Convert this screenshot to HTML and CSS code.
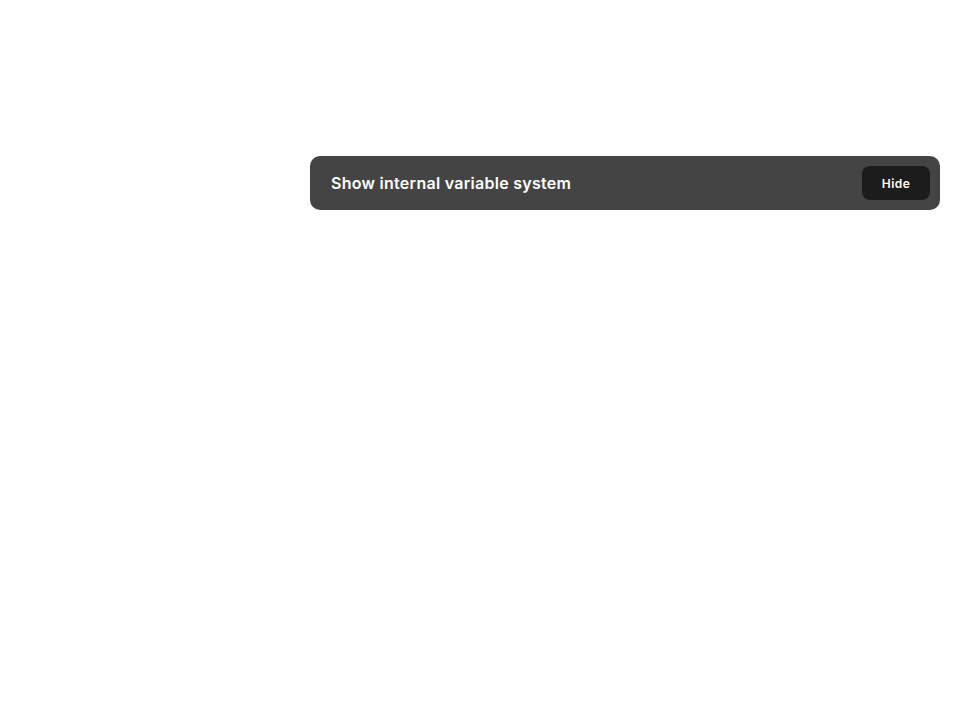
FILE: index.html
```html
<!DOCTYPE html>
<html>
<head>
<meta charset="utf-8">
<link rel="stylesheet" href="styles.css">
</head>
<body>
<div class="page">
  <div class="banner">
    <span class="banner-text">Show internal variable system</span>
    <button class="hide-btn">Hide</button>
  </div>
</div>
</body>
</html>
```
FILE: styles.css
```css
html, body {
  margin: 0;
  padding: 0;
  background: #ffffff;
  font-family: Inter, "Noto Sans", sans-serif;
}
.page {
  display: flex;
  justify-content: flex-end;
  padding: 156px 20px 0 0;
}
.banner {
  width: 630px;
  height: 54px;
  box-sizing: border-box;
  background: #444444;
  border-radius: 10px;
  display: flex;
  align-items: center;
  justify-content: space-between;
  padding: 0 10px 0 21px;
}
.banner-text {
  color: #ffffff;
  font-size: 16px;
  font-weight: 600;
  letter-spacing: 0.28px;
}
.hide-btn {
  width: 68px;
  height: 34px;
  border: none;
  border-radius: 8px;
  background: #1c1c1c;
  color: #ffffff;
  font-family: Inter, "Noto Sans", sans-serif;
  font-size: 12px;
  font-weight: 600;
  letter-spacing: 0.4px;
  padding: 0;
  cursor: pointer;
}
```
